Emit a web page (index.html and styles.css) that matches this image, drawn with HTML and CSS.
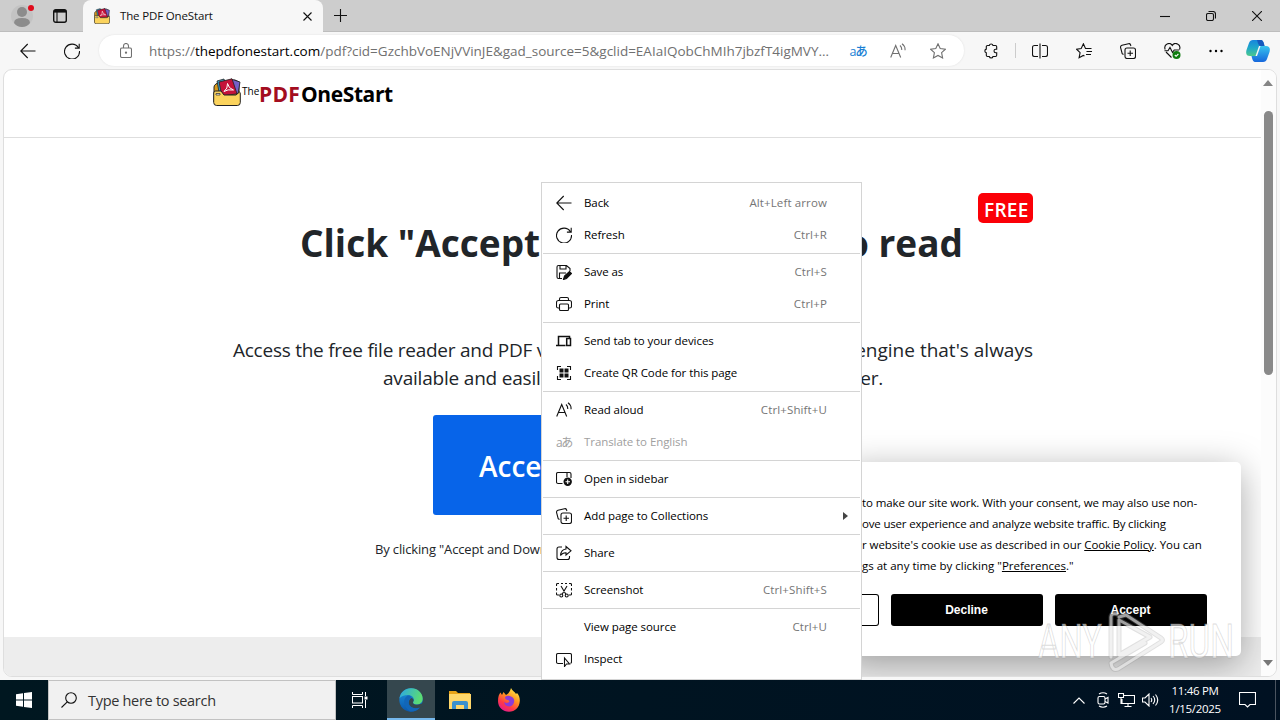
FILE: index.html
```html
<!DOCTYPE html>
<html lang="en">
<head>
<meta charset="utf-8">
<title>The PDF OneStart</title>
<link rel="stylesheet" href="styles.css">
</head>
<body>
<svg class="defs" width="0" height="0">
  <symbol id="back" viewBox="0 0 16 16"><path d="M15.500 8H.8M7.700 1L.8 8l6.900 7"/></symbol>
  <symbol id="refresh" viewBox="0 0 16 16"><path d="M14.300 4.500A7.500 7.500 0 1 0 15.500 8M15.200.8v4.300h-4.300"/></symbol>
  <symbol id="folder" viewBox="0 0 28 28">
    <path d="M1 24V9q0-2 2-3l3-2 16-2 4 2v20z" fill="#d99a1a" stroke="#222" stroke-width="1"/>
    <path d="M4 3l7-2 3 10-8 3z" fill="#3aa0c4" stroke="#222" stroke-width=".8"/>
    <path d="M18 1l9 3-2 12-8-2z" fill="#7560c8" stroke="#222" stroke-width=".8"/>
    <path d="M6 4L19 .8l5 15L9 18z" fill="#c5123a" stroke="#222" stroke-width=".8"/>
    <path d="M11 13.500q4-3 3.500-8 1 5 6 6.500-6-1-9.500 1.500" fill="none" stroke="#fff" stroke-width="1"/>
    <path d="M.7 15q0-2 2-2H8l3 4h12l3.500-3q.8 0 .8 2v8.500q0 3-3 3H3.700q-3 0-3-3z" fill="#fbd35d" stroke="#222" stroke-width="1"/>
    <path d="M3 15.500h4v1.500H3z" fill="#fff" stroke="#222" stroke-width=".7"/>
  </symbol>
  <symbol id="collections" viewBox="0 0 16 16"><rect x="5" y="5" width="10.500" height="10.500" rx="2"/><path d="M10.200 7.500v5.500M7.500 10.200H13M3.500 11.500L2.200 10.600 .6 4.600Q.2 3 2 2.300L8.500.7q1.500-.3 2 1l.4 1.300"/></symbol>
  <symbol id="aloud" viewBox="0 0 16 16"><path d="M.7 14.500L5.700 2.500l5 12M2.300 10.500h6.800M10 2.500q2 1.800 1.700 4.500M12 .8q3.500 2.500 3 6.500"/></symbol>
</svg>

<div class="desktop">
  <div class="tabs">
    <div class="profile"><svg width="24" height="24" viewBox="0 0 24 24"><circle cx="11" cy="13" r="11" fill="#c3c3c3"/><circle cx="11" cy="9" r="5" fill="#8c8c8c"/><path d="M3 20q0-5 8-5t8 5q-3 4-8 4t-8-4z" fill="#8c8c8c"/></svg><i></i></div>
    <div class="workspace"><svg class="ic" width="14" height="14" viewBox="0 0 14 14"><rect x=".7" y=".7" width="12.600" height="12.600" rx="2" stroke-width="1.400"/><path d="M1 2.300h12" stroke-width="2.600"/><path d="M4 3v10"/></svg></div>
    <div class="tab">
      <svg width="16" height="16"><use href="#folder"/></svg>
      <span class="tab-title">The PDF OneStart</span>
      <svg class="ic" width="9" height="9" viewBox="0 0 9 9"><path d="M.5.5l8 8M8.500.5l-8 8"/></svg>
    </div>
    <div class="newtab"><svg class="ic" width="14" height="14" viewBox="0 0 14 14"><path d="M6.500 0v13M0 6.500h13"/></svg></div>
    <div class="winbtns">
      <span><svg class="ic" width="10" height="10" viewBox="0 0 10 10"><path d="M0 5.500h10"/></svg></span>
      <span><svg class="ic" width="10" height="10" viewBox="0 0 10 10"><rect x=".5" y="2.500" width="7" height="7" rx="1.500"/><path d="M2.500.5H7q2.500 0 2.500 2.500v4.500"/></svg></span>
      <span><svg class="ic" width="10" height="10" viewBox="0 0 10 10"><path d="M0 0l10 10M10 0L0 10"/></svg></span>
    </div>
  </div>

  <div class="toolbar">
    <div class="cell"><svg class="ic" width="16" height="16"><use href="#back"/></svg></div>
    <div class="cell"><svg class="ic" width="16" height="16"><use href="#refresh"/></svg></div>
    <div class="address">
      <svg class="ic gray" width="12" height="15" viewBox="0 0 12 15"><rect x=".5" y="5" width="11" height="9.500" rx="1.500"/><path d="M3.500 5V3q0-2.500 2.500-2.500T8.500 3v2"/><circle cx="6" cy="9.700" r=".6"/></svg>
      <span class="url">https://<b>thepdfonestart.com</b>/pdf?cid=GzchbVoENjVVinJE&amp;gad_source=5&amp;gclid=EAIaIQobChMIh7jbzfT4igMVY…</span>
      <span class="pill-ic tr">aあ</span>
      <span class="pill-ic"><svg class="ic gray" width="16" height="16"><use href="#aloud"/></svg></span>
      <span class="pill-ic"><svg class="ic gray" width="16" height="16" viewBox="0 0 16 16"><path d="M8 .8l2.200 4.700 5.200.7-3.800 3.500 1 5.200L8 12.400l-4.600 2.500 1-5.200L.6 6.200l5.200-.7z"/></svg></span>
    </div>
    <div class="cell"><svg class="ic" width="16" height="16" viewBox="0 0 16 16"><path d="M4.500 2.500h1.800a1.900 1.900 0 0 1 3.700 0h2.500q1.200 0 1.200 1.200v2.600h-1a1.700 1.700 0 0 0 0 3.400h1v2.600q0 1.200-1.200 1.200H10a1.900 1.900 0 0 1-3.700 0H4.500q-1.200 0-1.200-1.200V9.800a1.900 1.900 0 0 1 0-3.700V3.700q0-1.200 1.200-1.200"/></svg></div>
    <i class="divider"></i>
    <div class="cell"><svg class="ic" width="16" height="16" viewBox="0 0 16 16"><path d="M6 2.500H2.500q-2 0-2 2v7q0 2 2 2H6M10 2.500h3.500q2 0 2 2v7q0 2-2 2H10M8 .5v15"/></svg></div>
    <div class="cell"><svg class="ic" width="16" height="16" viewBox="0 0 16 16"><path d="M15.500 5.500H9.500L7.400.8 5.200 5.500.6 6.200l3.500 3.500-1 5 4.200-2.300 1.200.6M10.500 8.500h5.500M10 11.500h5"/></svg></div>
    <div class="cell"><svg class="ic" width="16" height="16"><use href="#collections"/></svg></div>
    <div class="cell"><svg class="ic" width="17" height="16" viewBox="0 0 17 16"><path d="M1.200 6.500C-.8 1 6-1.500 8.300 2.500 10.500-1.500 17.500 1 15.500 6.500M2 9l5.500 5.500M.5 7.800h3.500L6 4.500l2.500 5 1.700-2.500h5"/><circle cx="12.500" cy="12" r="4" fill="#107c10" stroke="none"/><path d="M10.800 12l1.300 1.300L14.400 11" stroke="#fff"/></svg></div>
    <div class="cell"><svg width="14" height="4" viewBox="0 0 14 4"><circle cx="1.500" cy="2" r="1.200"/><circle cx="7" cy="2" r="1.200"/><circle cx="12.500" cy="2" r="1.200"/></svg></div>
    <div class="cell copilot"><svg width="24" height="22" viewBox="0 0 24 22">
      <defs><linearGradient id="g1" x1="0" y1="0" x2="0" y2="1"><stop offset="0" stop-color="#1785dd"/><stop offset=".5" stop-color="#1fa8c9"/><stop offset="1" stop-color="#4cc98c"/></linearGradient><linearGradient id="g2" x1="0" y1="0" x2="0" y2="1"><stop offset="0" stop-color="#37c4ee"/><stop offset="1" stop-color="#1667dc"/></linearGradient></defs>
      <path d="M7 0h8q2 0 3 4l.5 2H13L9.500 16H4q-5 0-3.500-6L3 3q1-3 4-3z" fill="url(#g1)"/>
      <path d="M17 22H9q-2 0-3-4l-.5-2H11L14.500 6H20q5 0 3.500 6L21 19q-1 3-4 3z" fill="url(#g2)"/>
      <path d="M11 0h4q2 0 3 4l.5 2h-4q-2 0-3.500-6z" fill="#1559bd"/></svg></div>
  </div>

  <div class="frame">
    <div class="page">
      <div class="site-header">
        <svg width="28" height="28"><use href="#folder"/></svg>
        <span class="lg-the">The</span><span class="lg-pdf">PDF</span><span class="lg-one">OneStart</span>
      </div>
      <div class="hero">
        <div class="badge">FREE</div>
        <div class="split h1"><span>Click "Accept</span><span>to read</span></div>
        <div class="split p1"><span>Access the free file reader and PDF v</span><span>engine that's always</span></div>
        <div class="split p2"><span>available and easil</span><span>er.</span></div>
        <div class="cta">Acce</div>
        <div class="note">By clicking "Accept and Down</div>
      </div>
      <div class="site-footer"></div>
      <div class="consent">
        <div class="ctext">
          <p class="l1">to make our site work. With your consent, we may also use non-</p>
          <p class="l2">ove user experience and analyze website traffic. By clicking</p>
          <p class="l3">r website's cookie use as described in our <u>Cookie Policy</u>. You can</p>
          <p class="l4">gs at any time by clicking "<u>Preferences</u>."</p>
        </div>
        <div class="cbtns"><span class="pref"></span><span class="cb">Decline</span><span class="cb">Accept</span></div>
      </div>
    </div>
    <div class="scroll">
      <svg width="10" height="6" viewBox="0 0 10 6"><path d="M0 6L5 0l5 6z" fill="#858585"/></svg>
      <i></i>
      <svg class="down" width="10" height="6" viewBox="0 0 10 6"><path d="M0 0l5 6 5-6z" fill="#777"/></svg>
    </div>
  </div>

  <div class="taskbar">
    <div class="start"><svg width="16" height="16" viewBox="0 0 16 16"><path d="M0 2.300L7 1.300V7.500H0zM8 1.100L16 0v7.500H8zM0 8.500h7v6.200l-7-1zM8 8.500h8V16l-8-1.100z" fill="#fff"/></svg></div>
    <div class="search"><svg class="ic" width="16" height="16" viewBox="0 0 16 16"><circle cx="10" cy="6" r="5.300"/><path d="M6.300 9.800L.5 15.500"/></svg><span>Type here to search</span></div>
    <div class="tb view"><svg width="16" height="16" viewBox="0 0 16 16" fill="none" stroke="#fff"><path d="M.5 0v2.500h10V0M.5 16v-2.500h10V16M13.500 0v4M13.500 8v8"/><rect x=".5" y="4.500" width="10" height="6.500"/><path d="M12.500 6h3" stroke-width="3"/></svg></div>
    <div class="tb active"><svg width="24" height="24" viewBox="0 0 24 24">
      <defs><linearGradient id="e1" x1="0" y1="0" x2="1" y2=".3"><stop offset="0" stop-color="#2aa6e8"/><stop offset="1" stop-color="#5bdc73"/></linearGradient><linearGradient id="e2" x1="0" y1="0" x2="0" y2="1"><stop offset="0" stop-color="#1c93dd"/><stop offset="1" stop-color="#0a57ad"/></linearGradient></defs>
      <circle cx="12" cy="12" r="11.700" fill="url(#e2)"/>
      <path d="M.5 10.500C1.500 4 6.500.3 12 .3c7 0 11.700 5 11.700 10.200 0 4-3 6-6 6-3 0-4.200-1.300-3.500-2.500 2-3-.5-7-5-7-4 0-7.500 1.500-8.700 3.500z" fill="url(#e1)"/>
      <path d="M14.200 13.500c-1 1.800 1 3.200 3.500 3.200 2.700 0 5-.9 6.300-2.200v4l-2 1c-2 1-4.500 1.200-7 .5-4-.6-6-4-5-7 .6-1.600 1.500-3 2.700-3 2 .8 2.400 2.500 1.500 3.500z" fill="#35474e"/>
      <path d="M8 8c-4 3-4.500 10 3 15.500 4 .5 7.500-1 10-4-8 2.500-12-2-11.500-6 .3-2 1.500-3.500 3-4C11.500 7.500 9.500 7 8 8z" fill="#1266b8"/></svg></div>
    <div class="tb"><svg width="22" height="20" viewBox="0 0 22 20"><path d="M0 1h7l2 2h12v16H0z" fill="#e8a317"/><path d="M0 4h22v15H0z" fill="#ffd76a"/><path d="M3 19v-6q0-2 2-2h12q2 0 2 2v6h-4v-4H7v4z" fill="#3b91cd"/></svg></div>
    <div class="tb"><svg width="24" height="24" viewBox="0 0 24 24">
      <defs><linearGradient id="f1" x1=".8" y1="0" x2=".2" y2="1"><stop offset="0" stop-color="#fff04a"/><stop offset=".4" stop-color="#ff9320"/><stop offset=".7" stop-color="#ff3a45"/><stop offset="1" stop-color="#e0159a"/></linearGradient></defs>
      <path d="M14 0c1 3 4 3.500 5 6l1-1c2 2 3 5 2.800 8C22.500 19.500 18 23.800 12 23.800S1 19.500 1 13C1 9 2 6 3.500 4.500L5 7l1.500-3L9 7c2-1 4-3 5-7z" fill="url(#f1)"/>
      <path d="M8 9q3-2 6-.5 4 1.500 3 6-1.500 4-5 4-4.500-.5-5-4.500 3 2 5 0 1-1-1-2-3 0-3-3z" fill="#8a3bd8"/></svg></div>
    <div class="tray">
      <svg width="12" height="7" viewBox="0 0 12 7"><path d="M.5 6.500L6 1l5.500 5.500"/></svg>
      <svg class="cam" width="12" height="16" viewBox="0 0 12 16"><rect x="1" y="4.500" width="7" height="7.500" rx="1.500"/><path d="M8 7l3-1.500v5.500L8 9.500M2 2q4-2.500 8 0M2 14q4 2.500 8 0"/></svg>
      <svg width="17" height="14" viewBox="0 0 17 14"><path d="M5 2.500h11.500v8H4V6M10 10.500v3M6.500 13.500h7M.5.5h5v4h-5zM3 4.500V10.500h1"/></svg>
      <svg class="vol" width="17" height="14" viewBox="0 0 17 14"><path d="M.5 5H3l4-4v12L3 9H.5zM9 5q1.500 2 0 4M11 3q3.500 4 0 8M13.500 1.500q4.500 5.500 0 11"/></svg>
      <div class="clock"><span>11:46 PM</span><span>1/15/2025</span></div>
      <svg class="act" width="17" height="16" viewBox="0 0 17 16"><path d="M.5.5h16v12H11L8.500 15 6 12.500H.5z"/></svg>
      <i class="peek"></i>
    </div>
  </div>

  <div class="menu">
    <div class="mi"><svg class="ic" width="16" height="16"><use href="#back"/></svg><span>Back</span><kbd>Alt+Left arrow</kbd></div>
    <div class="mi"><svg class="ic" width="16" height="16"><use href="#refresh"/></svg><span>Refresh</span><kbd>Ctrl+R</kbd></div>
    <hr>
    <div class="mi"><svg class="ic" width="16" height="16" viewBox="0 0 16 16"><path d="M6 14.500H2.500q-1.500 0-1.500-1.500V3q0-1.500 1.500-1.500h8L14 4.500V7M4 1.500V5h6V1.500M3.500 14V9H10"/><path d="M7.500 15.500l1-3.500 5-4.500 2 2-5 5z" fill="#111"/></svg><span>Save as</span><kbd>Ctrl+S</kbd></div>
    <div class="mi"><svg class="ic" width="16" height="16" viewBox="0 0 16 16"><path d="M3.500 12H2.200Q.5 12 .5 10.500v-4q0-2 2-2h11q2 0 2 2v4q0 1.500-1.700 1.500h-1.300M3.500 4.500V3q0-1.500 1.500-1.500h6q1.500 0 1.500 1.500v1.500"/><rect x="3.500" y="8" width="9" height="6.500" rx="1"/></svg><span>Print</span><kbd>Ctrl+P</kbd></div>
    <hr>
    <div class="mi"><svg class="ic" width="16" height="16" viewBox="0 0 16 16"><path d="M0 12.500h9.500M2.500 12V3.500H13.500V5" stroke-width="1.500"/><rect x="10.700" y="5.500" width="3.800" height="7" stroke-width="1.500"/></svg><span>Send tab to your devices</span></div>
    <div class="mi"><svg class="ic" width="16" height="16" viewBox="0 0 16 16"><path d="M1.500 5V1.500H5M11 1.500h3.500V5M14.500 11v3.500H11M5 14.500H1.500V11"/><path d="M3.500 3.500h4v4h-4zM8.500 3.500h4v4h-4zM3.500 8.500h4v4h-4zM8.500 8.500h4v4h-4z" fill="#111" stroke="none"/></svg><span>Create QR Code for this page</span></div>
    <hr>
    <div class="mi"><svg class="ic" width="16" height="16"><use href="#aloud"/></svg><span>Read aloud</span><kbd>Ctrl+Shift+U</kbd></div>
    <div class="mi off"><em>aあ</em><span>Translate to English</span></div>
    <hr>
    <div class="mi"><svg class="ic" width="16" height="16" viewBox="0 0 16 16"><path d="M6.500 12.500H2q-1.500 0-1.500-1.500V3Q.5 1.500 2 1.500h11.500Q15 1.500 15 3v4M11 2v4"/><circle cx="11.700" cy="10.800" r="4.200" fill="#111" stroke="none"/><path d="M11.700 8.500V13M9.500 10.800H14" stroke="#fff"/></svg><span>Open in sidebar</span></div>
    <hr>
    <div class="mi"><svg class="ic" width="16" height="16"><use href="#collections"/></svg><span>Add page to Collections</span><svg class="arrow" width="5" height="8" viewBox="0 0 5 8"><path d="M0 0l5 4-5 4z" fill="#444"/></svg></div>
    <hr>
    <div class="mi"><svg class="ic" width="16" height="16" viewBox="0 0 16 16"><path d="M6 2H3Q1 2 1 4v8.500q0 2 2 2h8.500q2 0 2-2V11M10 1.500l5 4.300-5 4.200V7.700Q6.500 7.500 4.500 10.500 5 4.500 10 4z"/></svg><span>Share</span></div>
    <hr>
    <div class="mi"><svg class="ic" width="16" height="16" viewBox="0 0 16 16"><path d="M.5 4V2.500q0-1 1-1H3M5 1.500h2M9 1.500h2M13 1.500h1.500q1 0 1 1V4M15.500 6v2.500M.5 6v2.500M.5 10.500V12q0 1 1 1H3M15.500 10.500V12q0 1-1 1H13M5 4l5 8.500M11 4l-5 8.500"/><circle cx="5.300" cy="13.500" r="1.500"/><circle cx="10.700" cy="13.500" r="1.500"/></svg><span>Screenshot</span><kbd>Ctrl+Shift+S</kbd></div>
    <hr>
    <div class="mi"><svg width="16" height="16"></svg><span>View page source</span><kbd>Ctrl+U</kbd></div>
    <div class="mi"><svg class="ic" width="16" height="16" viewBox="0 0 16 16"><path d="M7 12.500H2q-1.500 0-1.500-1.500V4Q.5 2.500 2 2.500h12q1.500 0 1.500 1.500v7q0 1-1 1.500"/><path d="M8.500 7v8.500l2-2.500h3z"/></svg><span>Inspect</span></div>
  </div>

  <svg class="mark" width="220" height="72" viewBox="0 0 220 72">
    <g font-family="Roboto, 'Liberation Sans', sans-serif" font-size="49" fill="#fff" fill-opacity=".6" stroke="#999" stroke-opacity=".35" stroke-width="1">
      <text x="2" y="50" textLength="64" lengthAdjust="spacingAndGlyphs">ANY</text>
      <text x="132" y="50" textLength="66" lengthAdjust="spacingAndGlyphs">RUN</text>
    </g>
    <g fill="none" stroke-linejoin="round" stroke-linecap="round">
      <path d="M75 49V9q0-4 6-3M83 12v35l31-18zM83 9l7-2 35 23q3 2 0 4L82 61q-6 2-7-6l34-20" stroke="#999" stroke-opacity=".3" stroke-width="5"/>
      <path d="M75 49V9q0-4 6-3M83 12v35l31-18zM83 9l7-2 35 23q3 2 0 4L82 61q-6 2-7-6l34-20" stroke="#fff" stroke-opacity=".55" stroke-width="3"/>
    </g>
  </svg>
</div>
</body>
</html>
```
FILE: styles.css
```css
* { box-sizing: border-box; }
body { margin: 0; font-family: "Open Sans", "Noto Sans", sans-serif; color: #111; }
svg { flex: none; display: block; }
.defs { position: absolute; }
.ic { fill: none; stroke: #111; stroke-width: 1.1; }
.gray { stroke: #707070; }
.desktop { position: relative; width: 1280px; height: 720px; overflow: hidden; display: flex; flex-direction: column; background: #f7f7f7; }

.tabs { height: 32px; flex: none; display: flex; background: #cdcdcd; box-shadow: inset 0 -1px #bdbdbd; }
.profile { position: relative; width: 38px; padding: 3px 0 0 11px; }
.profile i { position: absolute; left: 28px; top: 5px; width: 6px; height: 6px; border-radius: 50%; background: #e00b1c; }
.workspace { width: 45px; padding: 9px 0 0 15px; }
.tab { width: 240px; height: 32px; padding: 0 11px; display: flex; align-items: center; background: #f7f7f7; border-radius: 8px 8px 0 0; }
.tab-title { flex: 1; margin: -2px 0 0 10px; font-size: 11.500px; letter-spacing: -.15px; }
.newtab { padding: 9px 0 0 11px; }
.winbtns { margin-left: auto; display: flex; }
.winbtns span { width: 46px; display: flex; align-items: center; justify-content: center; }

.toolbar { height: 37px; flex: none; padding: 0 2px 0 6px; display: flex; align-items: center; }
.cell { width: 44px; height: 30px; display: flex; align-items: center; justify-content: center; }
.copilot { width: 40px; }
.address { width: 865px; height: 31px; margin: 0 5px; padding: 0 6px 0 21px; display: flex; align-items: center; background: #fff; border-radius: 16px; box-shadow: 0 0 2px #ddd; }
.url { width: 690px; margin-left: 17px; font-size: 13.500px; letter-spacing: -.01px; color: #707070; white-space: nowrap; }
.url b { font-weight: 400; color: #000; }
.pill-ic { width: 40px; display: flex; justify-content: center; }
.tr { font: 500 12.500px "Open Sans", "Noto Sans CJK JP", sans-serif; letter-spacing: -1px; color: #1a7fd4; }
.divider { width: 1px; height: 15px; margin: 0 2px; background: #ccc; }

.frame { flex: 1; margin: 0 3px 3px; display: flex; background: #fff; border: 1px solid #dedede; border-radius: 9px; overflow: hidden; }
.page { position: relative; width: 1257px; display: flex; flex-direction: column; overflow: hidden; }
.site-header { height: 68px; flex: none; display: flex; padding: 8px 0 0 209px; border-bottom: 1px solid #dedede; white-space: nowrap; }
.lg-the { width: 18px; padding: 5px 0 0 1px; font-size: 10px; line-height: 16px; color: #000; }
.lg-pdf, .lg-one { font-size: 21px; line-height: 33px; font-weight: 700; letter-spacing: -.4px; color: #000; }
.lg-pdf { width: 42px; letter-spacing: .2px; color: #a30d20; }
.hero { flex: 1; position: relative; display: flex; flex-direction: column; }
.badge { position: absolute; left: 974px; top: 55px; width: 55px; height: 30px; padding-left: 6px; border-radius: 5px; background: #fb0007; color: #fff; font-size: 19px; font-weight: 600; letter-spacing: .3px; line-height: 34px; }
.split { display: flex; justify-content: space-between; white-space: nowrap; }
.h1 { width: 663px; margin: 80px 0 0 296px; font-size: 37px; line-height: 50px; font-weight: 700; color: #212529; }
.p1 { width: 800px; margin: 68px 0 0 229px; font-size: 19px; line-height: 28px; color: #212529; }
.p1 span:first-child { letter-spacing: -.25px; }
.p2 { width: 500px; margin-left: 379px; font-size: 19px; line-height: 28px; letter-spacing: -.2px; color: #212529; }
.cta { width: 400px; height: 100px; margin: 23px 0 0 429px; padding-left: 46px; border-radius: 3px; background: #0764e9; color: #fff; font-size: 28px; font-weight: 600; line-height: 103px; }
.note { margin: 22px 0 0 371px; font-size: 13px; line-height: 24px; letter-spacing: -.15px; color: #212529; }
.site-footer { height: 39px; flex: none; background: #ededed; }

.consent { position: absolute; left: 840px; top: 392px; width: 397px; height: 194px; padding: 30px 0 0 18px; border-radius: 5px; background: #fff; box-shadow: 0 8px 36px rgba(0,0,0,.35); }
.ctext { font-size: 11.500px; line-height: 21px; white-space: nowrap; color: #000; }
.ctext p { margin: 0; }
.l1 { letter-spacing: -.11px; }
.l2 { letter-spacing: -.18px; }
.l3 { letter-spacing: -.06px; }
.cbtns { margin-top: 18px; display: flex; gap: 12px; }
.pref { width: 17px; height: 32px; border: 1px solid #000; border-left: 0; border-radius: 0 3px 3px 0; }
.cb { width: 152px; height: 32px; padding-right: 1px; border-radius: 3px; background: #000; color: #fff; font: bold 12px/33px "Liberation Sans", Arial, sans-serif; text-align: center; }

.scroll { flex: 1; display: flex; flex-direction: column; align-items: center; padding: 10px 1px 10px 0; background: #fcfcfc; }
.scroll i { width: 9px; height: 264px; margin-top: 25px; border-radius: 5px; background: #898989; }
.down { margin-top: auto; }

.taskbar { height: 40px; flex: none; display: flex; background: linear-gradient(90deg, #001720, #001122); }
.start { width: 48px; display: flex; align-items: center; justify-content: center; }
.search { width: 288px; padding-left: 12px; display: flex; align-items: center; gap: 11px; background: #f1f1f1; border: 1px solid #c2c2c2; font-size: 14.500px; letter-spacing: -.3px; color: #333; }
.tb { width: 49px; display: flex; align-items: center; justify-content: center; }
.view { width: 51px; padding-right: 3px; }
.active { width: 48px; background: #35474e; box-shadow: inset 0 -2px #76b9ed; }
.tray { margin-left: auto; display: flex; align-items: center; gap: 9px; }
.tray svg { fill: none; stroke: #fff; stroke-width: 1.1; }
.tray .cam { margin-left: 3px; }
.clock { width: 54px; display: flex; flex-direction: column; align-items: center; color: #fff; font-size: 11.500px; line-height: 18px; letter-spacing: -.3px; white-space: nowrap; }
.tray .vol { margin-left: -2px; }
.act { margin: 0 10px 0 8px; }
.peek { width: 1px; height: 40px; margin-right: 4px; background: #4a5460; }

.menu { position: absolute; left: 541px; top: 182px; width: 321px; height: 498px; padding: 4px 0; background: #fff; border: 1px solid #d4d4d4; }
.mi { height: 32px; padding: 0 34px 0 14px; display: flex; align-items: center; font-size: 11.500px; letter-spacing: -.07px; color: #000; }
.mi span { margin: -2px 0 0 12px; white-space: nowrap; }
.mi kbd { margin: -2px 0 0 auto; font: inherit; letter-spacing: .12px; color: #757575; }
.mi em { width: 16px; font: 12px "Open Sans", "Noto Sans CJK JP", sans-serif; letter-spacing: -1.500px; white-space: nowrap; }
.mi .arrow { margin-left: auto; margin-right: -21px; }
.off, .off em { color: #a0a0a0; }
.menu hr { height: 1px; margin: 2px 1px; border: 0; background: #d4d4d4; }

.mark { position: absolute; left: 1036px; top: 608px; }
```
